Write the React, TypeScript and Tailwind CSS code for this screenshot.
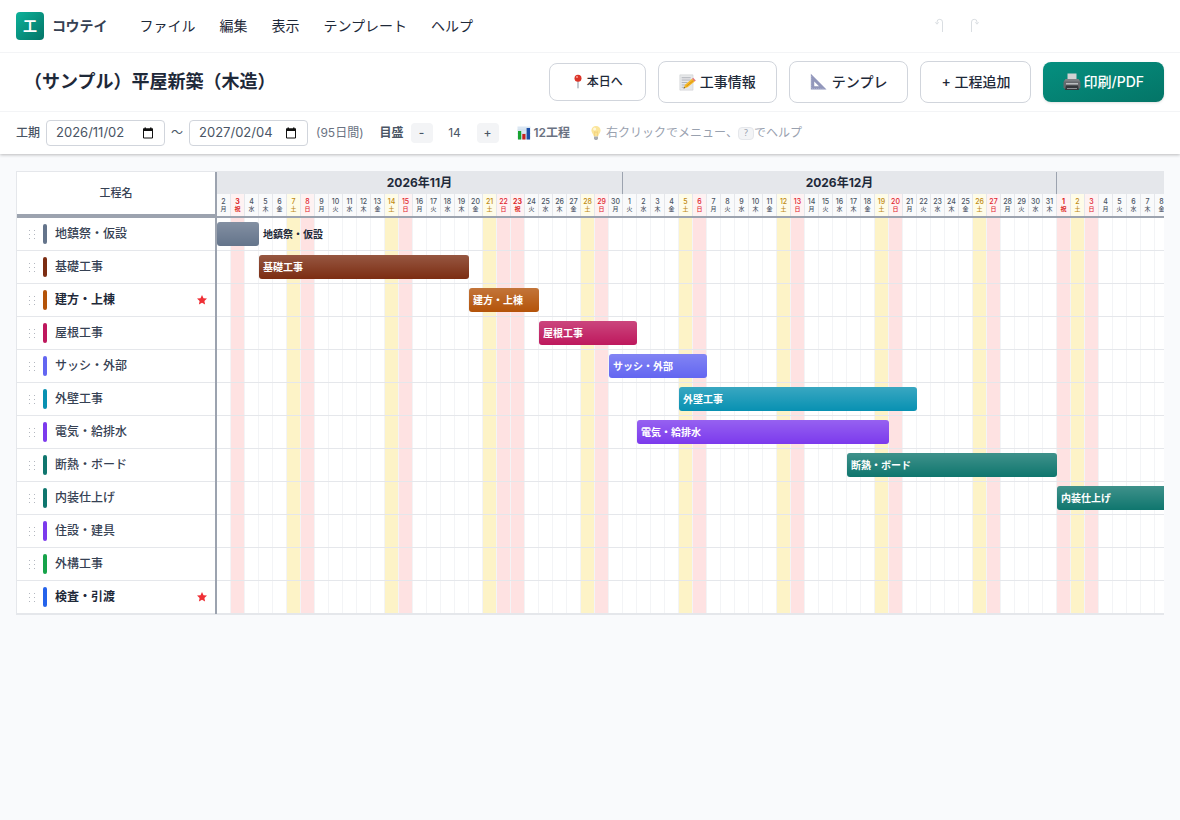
import type { ReactNode } from "react";

const DAY_WIDTH = 14;
const DAY_COUNT = 95;
const WEEKDAYS = ["日", "月", "火", "水", "木", "金", "土"];
const HOLIDAYS = ["2026-11-3", "2026-11-23", "2027-1-1", "2027-1-11"];

type DayKind = "weekday" | "saturday" | "sunday" | "holiday";

type Day = {
  key: string;
  month: string;
  date: number;
  label: string;
  kind: DayKind;
};

type Task = {
  name: string;
  color: string;
  start: number;
  days: number;
  milestone?: boolean;
  labelOutside?: boolean;
};

const TASKS: Task[] = [
  { name: "地鎮祭・仮設", color: "#64748b", start: 0, days: 3, labelOutside: true },
  { name: "基礎工事", color: "#7c2d12", start: 3, days: 15 },
  { name: "建方・上棟", color: "#b45309", start: 18, days: 5, milestone: true },
  { name: "屋根工事", color: "#be185d", start: 23, days: 7 },
  { name: "サッシ・外部", color: "#6366f1", start: 28, days: 7 },
  { name: "外壁工事", color: "#0891b2", start: 33, days: 17 },
  { name: "電気・給排水", color: "#7c3aed", start: 30, days: 18 },
  { name: "断熱・ボード", color: "#0f766e", start: 45, days: 15 },
  { name: "内装仕上げ", color: "#0f766e", start: 60, days: 18 },
  { name: "住設・建具", color: "#7c3aed", start: 76, days: 8 },
  { name: "外構工事", color: "#16a34a", start: 80, days: 12 },
  { name: "検査・引渡", color: "#2563eb", start: 92, days: 3, milestone: true },
];

function buildDays(): Day[] {
  return Array.from({ length: DAY_COUNT }, (_, index) => {
    const d = new Date(2026, 10, 2 + index);
    const key = `${d.getFullYear()}-${d.getMonth() + 1}-${d.getDate()}`;
    const isHoliday = HOLIDAYS.includes(key);
    let kind: DayKind = "weekday";
    if (isHoliday) kind = "holiday";
    else if (d.getDay() === 6) kind = "saturday";
    else if (d.getDay() === 0) kind = "sunday";
    return {
      key,
      month: `${d.getFullYear()}年${d.getMonth() + 1}月`,
      date: d.getDate(),
      label: isHoliday ? "祝" : WEEKDAYS[d.getDay()],
      kind,
    };
  });
}

const days = buildDays();

const months = days.reduce<{ name: string; count: number }[]>((list, day) => {
  const last = list[list.length - 1];
  if (last && last.name === day.month) last.count += 1;
  else list.push({ name: day.month, count: 1 });
  return list;
}, []);

const headClass: Record<DayKind, string> = {
  weekday: "bg-gray-50 font-medium text-[#4b5563]",
  saturday: "bg-[#fefce8] font-medium text-[#c08a10]",
  sunday: "bg-[#fef2f2] font-medium text-[#e11d2e]",
  holiday: "bg-[#fef2f2] font-bold text-[#dc2626]",
};

const columnClass: Record<DayKind, string> = {
  weekday: "bg-white",
  saturday: "bg-[#fdf3c7]",
  sunday: "bg-[#fee2e2]",
  holiday: "bg-[#fee2e2]",
};

function PinIcon() {
  return (
    <svg className="h-4 w-3" viewBox="0 0 12 16" aria-hidden="true">
      <path d="M5.4 6h1.2v7.6L6 15l-.6-1.4z" fill="#9ca3af" />
      <circle cx="6" cy="4.2" r="3.5" fill="#dc3428" />
      <circle cx="5" cy="3" r="1.1" fill="#f79b90" />
    </svg>
  );
}

function MemoIcon() {
  return (
    <svg className="size-[17px]" viewBox="0 0 16 16" aria-hidden="true">
      <path d="M.8.8h12.4v14.4H.8z" fill="#e7e8ea" stroke="#cfd1d4" strokeWidth=".6" />
      <path d="M2.5 3.5h8.5M2.5 5.700h8.5M2.5 8h5.5M2.5 10.300h4M2.5 12.500h3.5" stroke="#9ea3aa" strokeWidth=".7" />
      <path d="m4.300 13.600 1.400-3.600 6.600-5.600 2.500 2.700-6.800 5.400z" fill="#f4b826" />
      <path d="m6.900 11.600 6.900-5.700" stroke="#d98f12" strokeWidth=".9" />
      <path d="m12.300 4.400 1-.8 2.500 2.600-1 .9z" fill="#e5737a" />
      <path d="m4.300 13.600.5-1.300 1 .9z" fill="#444" />
    </svg>
  );
}

function RulerIcon() {
  return (
    <svg className="size-[18px]" viewBox="0 0 17 17" aria-hidden="true">
      <path fillRule="evenodd" d="M.8.6 15.600 15.500H.8zM4 8v4.500h4.500z" fill="#9297bb" />
      <path d="M1.500 3v11.800h12" fill="none" stroke="#b6bad8" strokeWidth=".7" strokeDasharray="1 1" />
    </svg>
  );
}

function PrinterIcon() {
  return (
    <svg className="size-[18px]" viewBox="0 0 18 18" aria-hidden="true">
      <path d="M4.500.5h9V7h-9z" fill="#d0d1d2" />
      <path d="M2.500 6h13L17.500 9v5.500l-1.500 1.500H2L.5 14.500V9z" fill="#66696d" />
      <path d="M2.500 6h13l1.500 2.500H1z" fill="#7d8084" />
      <path d="M3 10h12v1.500H3z" fill="#b9bcbf" />
      <path d="M3 12.500h12l1 4.500H2z" fill="#34373b" />
      <path d="M4 15.500h10" stroke="#8d9094" strokeWidth="1" />
    </svg>
  );
}

function ChartIcon() {
  return (
    <svg className="size-3.5" viewBox="0 0 14 14" aria-hidden="true">
      <path d="M.5.5h13v13H.5z" fill="#dbe7f2" />
      <path d="M.5 4h13M.5 7.500h13M.5 11h13" stroke="#bdd0e2" strokeWidth=".5" />
      <path d="M1 5h3.200v8.500H1z" fill="#18a330" />
      <path d="M5.300 8h3.200v5.500H5.300z" fill="#c5221f" />
      <path d="M9.600 2h3.400v11.500H9.600z" fill="#1d4fa8" />
    </svg>
  );
}

function BulbIcon() {
  return (
    <svg className="h-4 w-3" viewBox="0 0 12 16" aria-hidden="true">
      <path
        d="M6 1a4.600 4.600 0 0 0-4.600 4.600C1.400 8 3.500 9 3.800 11.500h4.400C8.500 9 10.600 8 10.600 5.600A4.600 4.600 0 0 0 6 1z"
        fill="#fbe59a"
      />
      <path d="M4.600 11V6.500L6 7.500l1.400-1V11" fill="none" stroke="#f0cd72" strokeWidth=".7" />
      <circle cx="4.600" cy="4" r="1.500" fill="#fff8dc" />
      <path d="M4 11.500h4v2.300L7 15H5l-1-1.200z" fill="#a9adb3" />
    </svg>
  );
}

function CalendarIcon() {
  return (
    <svg className="size-3" viewBox="0 0 12 12" aria-hidden="true">
      <path d="M1.500 2h9v9h-9z" fill="none" stroke="#111" />
      <path d="M1 1.500h10V4H1zM2.500.5h1.500v1.500H2.500zM8 .5h1.500v1.500H8z" fill="#111" />
    </svg>
  );
}

function UndoIcon({ flipped }: { flipped?: boolean }) {
  return (
    <svg
      className={flipped ? "h-4 w-3 -scale-x-100" : "h-4 w-3"}
      viewBox="0 0 12 16"
      fill="none"
      stroke="#d1d5db"
      strokeWidth=".8"
      aria-hidden="true"
    >
      <path d="M8.500 14V4A2.700 2.700 0 0 0 5.800 1.300 2.700 2.700 0 0 0 3 4v1.300M1.300 4.300 3 6.200l1.700-1.900" />
    </svg>
  );
}

function ToolButton({ children, small }: { children: ReactNode; small?: boolean }) {
  return (
    <button
      type="button"
      className={
        small
          ? "flex h-[38px] items-center gap-[3px] rounded-lg border border-gray-300 bg-white px-[22px] text-xs font-medium text-gray-800"
          : "flex h-[42px] items-center gap-1 rounded-lg border border-gray-300 bg-white px-5 text-sm font-medium text-gray-800"
      }
    >
      {children}
    </button>
  );
}

function DateField({ id, label, value }: { id: string; label: string; value: string }) {
  return (
    <span className="flex h-[26px] items-center rounded border border-gray-300 bg-white pr-2.5 pl-[9px]">
      <input
        id={id}
        aria-label={label}
        defaultValue={value}
        className="w-[86px] bg-transparent text-[13px] text-gray-600 outline-none"
      />
      <button type="button" aria-label={`${label}を選択`}>
        <CalendarIcon />
      </button>
    </span>
  );
}

function AppHeader() {
  return (
    <header className="relative bg-white shadow-[0_1px_3px_rgba(0,0,0,0.25)]">
      <div className="flex h-[53px] items-center border-b border-gray-100 px-4">
        <span className="flex size-7 items-center justify-center rounded bg-linear-to-br from-[#0db29a] to-[#047567] text-sm font-bold text-white">
          工
        </span>
        <span className="ml-2 text-sm font-bold text-gray-700">コウテイ</span>
        <nav className="ml-5 flex text-sm text-gray-800">
          {["ファイル", "編集", "表示", "テンプレート", "ヘルプ"].map((item) => (
            <button key={item} type="button" className="px-3 py-1">
              {item}
            </button>
          ))}
        </nav>
        <div className="mr-[184px] ml-auto flex gap-[22px]">
          <button type="button" aria-label="元に戻す">
            <UndoIcon />
          </button>
          <button type="button" aria-label="やり直す">
            <UndoIcon flipped />
          </button>
        </div>
      </div>

      <div className="flex h-[59px] items-center justify-between border-b border-gray-100 px-4">
        <h1 className="pl-2 text-lg font-bold text-gray-800">（サンプル）平屋新築（木造）</h1>
        <div className="flex items-center gap-3">
          <ToolButton small>
            <PinIcon />
            本日へ
          </ToolButton>
          <ToolButton>
            <MemoIcon />
            工事情報
          </ToolButton>
          <ToolButton>
            <RulerIcon />
            テンプレ
          </ToolButton>
          <ToolButton>+ 工程追加</ToolButton>
          <button
            type="button"
            className="flex h-10 items-center gap-0.5 rounded-lg bg-linear-to-br from-[#059080] to-[#047567] px-5 text-sm font-medium text-white shadow-sm"
          >
            <PrinterIcon />
            印刷/PDF
          </button>
        </div>
      </div>

      <div className="flex h-[42px] items-center px-4 text-xs text-gray-600">
        <label htmlFor="period-start" className="mr-1.5 font-medium">
          工期
        </label>
        <DateField id="period-start" label="開始日" value="2026/11/02" />
        <span className="mx-1.5">〜</span>
        <DateField id="period-end" label="終了日" value="2027/02/04" />
        <span className="ml-2 text-gray-500">(95日間)</span>
        <span className="ml-4 font-semibold">目盛</span>
        <button type="button" aria-label="縮小" className="ml-[7px] h-5 w-[22px] rounded bg-gray-100 font-medium">
          -
        </button>
        <span className="w-11 text-center">14</span>
        <button type="button" aria-label="拡大" className="h-5 w-[22px] rounded bg-gray-100 font-medium">
          +
        </button>
        <span className="ml-[18px] flex items-center gap-[3px] font-semibold text-gray-500">
          <ChartIcon />
          12工程
        </span>
        <span className="ml-5 flex items-center text-gray-400">
          <BulbIcon />
          <span className="ml-1">右クリックでメニュー、</span>
          <kbd className="flex h-[13px] w-4 items-center justify-center rounded-sm border border-gray-200 bg-gray-100 font-sans text-[9px]">
            ?
          </kbd>
          でヘルプ
        </span>
      </div>
    </header>
  );
}

function TaskNames() {
  return (
    <div className="w-[201px] shrink-0 border-r-2 border-l border-r-[#9ca3af] border-l-gray-200 bg-white">
      <div className="flex h-[46px] items-center justify-center border-b-4 border-[#9ca3af] text-[11px] font-medium text-gray-700">
        工程名
      </div>
      <ul>
        {TASKS.map((task) => (
          <li key={task.name} className="flex h-[33px] items-center border-b border-gray-200 pr-2 pl-3">
            <svg className="h-[9px] w-1.5" viewBox="0 0 6 9" fill="#b3b7bf" aria-hidden="true">
              <path d="M0 0h1v1H0zM5 0h1v1H5zM0 4h1v1H0zM5 4h1v1H5zM0 8h1v1H0zM5 8h1v1H5z" />
            </svg>
            <span className="ml-2 h-5 w-1 rounded-xs" style={{ backgroundColor: task.color }} />
            <span className={task.milestone ? "ml-2 text-xs font-bold text-gray-800" : "ml-2 text-xs font-medium text-gray-700"}>
              {task.name}
            </span>
            {task.milestone ? (
              <svg className="ml-auto size-2.5" viewBox="0 0 10 10" fill="#ef2f35" aria-label="重要">
                <path d="m5 0 1.500 3.200 3.500.4-2.600 2.400.7 3.500L5 7.800 1.900 9.500 2.600 6 0 3.600l3.500-.4z" />
              </svg>
            ) : null}
          </li>
        ))}
      </ul>
    </div>
  );
}

function Timeline() {
  return (
    <div className="min-w-0 flex-1 overflow-x-auto bg-white [scrollbar-width:none]">
      <div style={{ width: DAY_WIDTH * DAY_COUNT }}>
        <div className="flex h-[22px] bg-gray-200">
          {months.map((month) => (
            <div
              key={month.name}
              className="flex items-center justify-center border-r border-[#9ca3af] text-xs font-bold text-gray-800"
              style={{ width: month.count * DAY_WIDTH }}
            >
              {month.name}
            </div>
          ))}
        </div>
        <div className="flex h-6 border-b-2 border-[#9ca3af]">
          {days.map((day) => (
            <div
              key={day.key}
              className={`flex w-3.5 shrink-0 flex-col items-center justify-center border-r border-gray-200 ${headClass[day.kind]}`}
            >
              <span className="text-[7px] leading-[7px]">{day.date}</span>
              <span className="text-[6px] leading-[7px]">{day.label}</span>
            </div>
          ))}
        </div>
        <div className="relative">
          <div className="absolute inset-0 flex">
            {days.map((day) => (
              <div key={day.key} className={`w-3.5 shrink-0 border-r border-gray-100 ${columnClass[day.kind]}`} />
            ))}
          </div>
          {TASKS.map((task) => (
            <div key={task.name} className="relative flex h-[33px] border-b border-gray-200 pt-1">
              <div
                className="flex h-6 shrink-0 items-center rounded-[3px] bg-linear-to-b from-white/20 to-transparent pl-1 text-[10px] font-semibold whitespace-nowrap text-white"
                style={{
                  marginLeft: task.start * DAY_WIDTH,
                  width: task.days * DAY_WIDTH,
                  backgroundColor: task.color,
                }}
              >
                {task.labelOutside ? null : task.name}
              </div>
              {task.labelOutside ? (
                <span className="flex h-6 items-center pl-1 text-[10px] font-semibold text-gray-800">{task.name}</span>
              ) : null}
            </div>
          ))}
        </div>
      </div>
    </div>
  );
}

export default function App() {
  return (
    <div className="min-h-screen bg-[#f9fafc] font-[Inter,'Noto_Sans_CJK_JP',sans-serif]">
      <AppHeader />
      <main className="px-4 pt-[17px] pb-4">
        <div className="flex border-y border-gray-200">
          <TaskNames />
          <Timeline />
        </div>
      </main>
    </div>
  );
}
